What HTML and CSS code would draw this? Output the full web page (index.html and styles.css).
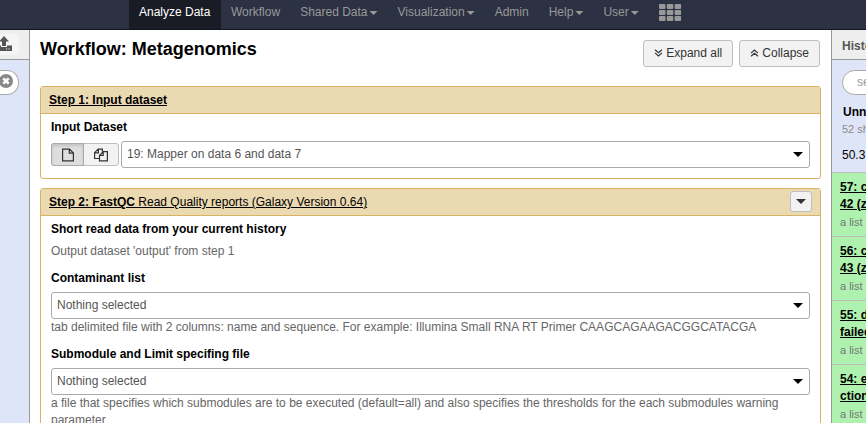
FILE: index.html
```html
<!DOCTYPE html>
<html lang="en">
<head>
<meta charset="utf-8">
<title>Galaxy</title>
<link rel="stylesheet" href="styles.css">
</head>
<body>
<nav class="masthead">
  <a class="tab active">Analyze Data</a>
  <a class="tab">Workflow</a>
  <a class="tab">Shared Data<i class="caret"></i></a>
  <a class="tab">Visualization<i class="caret"></i></a>
  <a class="tab">Admin</a>
  <a class="tab">Help<i class="caret"></i></a>
  <a class="tab">User<i class="caret"></i></a>
  <a class="tab apps"><svg width="23" height="18" viewBox="0 0 23 18"><g fill="#999"><rect width="6.5" height="5" rx="1"/><rect x="7.8" width="6.5" height="5" rx="1"/><rect x="15.6" width="6.5" height="5" rx="1"/><rect y="6" width="6.5" height="5" rx="1"/><rect x="7.8" y="6" width="6.5" height="5" rx="1"/><rect x="15.6" y="6" width="6.5" height="5" rx="1"/><rect y="12" width="6.5" height="5" rx="1"/><rect x="7.8" y="12" width="6.5" height="5" rx="1"/><rect x="15.6" y="12" width="6.5" height="5" rx="1"/></g></svg></a>
</nav>
<div class="columns">
  <aside class="tools">
    <div class="panel-head"><span class="upload"><svg width="14" height="16" viewBox="0 0 14 16"><path fill="#555" d="M6 0l5 5.500H8V10H4V5.500H1zM-2 9.500H3V11H9V9.500H14V15H-2z"/><path fill="#eee" d="M8 12.500h1.200v1H8zM10.500 12.500h1.200v1h-1.200z"/></svg></span></div>
    <div class="tool-search"><svg width="14" height="14" viewBox="0 0 14 14"><circle cx="7" cy="7" r="7" fill="#888"/><path d="M4.300 4.300l5.400 5.400M9.700 4.300l-5.400 5.400" stroke="#fff" stroke-width="2.600"/></svg></div>
  </aside>
  <main class="center">
    <header class="title-row">
      <h1>Workflow: Metagenomics</h1>
      <div class="actions">
        <button class="btn"><svg width="9" height="9" viewBox="0 0 9 9"><path d="M1 .7l3.500 3L8 .7M1 3.900l3.500 3L8 3.900"/></svg>Expand all</button>
        <button class="btn"><svg width="9" height="9" viewBox="0 0 9 9"><path d="M1 4.100l3.500-3L8 4.100M1 7.300l3.500-3L8 7.300"/></svg>Collapse</button>
      </div>
    </header>
    <section class="step">
      <div class="step-head"><u><b>Step 1: Input dataset</b></u></div>
      <div class="step-body">
        <label>Input Dataset</label>
        <div class="data-row">
          <div class="toggle">
            <span class="on"><svg width="12" height="14" viewBox="0 0 12 14"><path d="M.6 1.100H7.500L11.400 5V12.900H.6zM7.300 1.100V5.200H11.400"/></svg></span>
            <span><svg width="14" height="14" viewBox="0 0 14 14"><path d="M5.500 10.500H.6V4.700L4.200 1.100H8.400V3.500M4.400 1.100V4.900H.6M5.500 7.300L9.200 3.600H13.400V12.900H5.500zM9.200 3.600V7.400H5.500"/></svg></span>
          </div>
          <div class="select">19: Mapper on data 6 and data 7<i class="arrow"></i></div>
        </div>
      </div>
    </section>
    <section class="step">
      <div class="step-head"><u><b>Step 2: FastQC</b> Read Quality reports (Galaxy Version 0.64)</u><span class="menu"><i class="arrow"></i></span></div>
      <div class="step-body">
        <label>Short read data from your current history</label>
        <p class="output">Output dataset 'output' from step 1</p>
        <label>Contaminant list</label>
        <div class="select">Nothing selected<i class="arrow"></i></div>
        <p class="help">tab delimited file with 2 columns: name and sequence. For example: Illumina Small RNA RT Primer CAAGCAGAAGACGGCATACGA</p>
        <label>Submodule and Limit specifing file</label>
        <div class="select">Nothing selected<i class="arrow"></i></div>
        <p class="help">a file that specifies which submodules are to be executed (default=all) and also specifies the thresholds for the each submodules warning parameter</p>
      </div>
    </section>
  </main>
  <aside class="history">
    <div class="panel-head">History</div>
    <div class="summary">
      <div class="search">search datasets</div>
      <b class="name">Unnamed history</b>
      <div class="shown">52 shown</div>
      <div class="size">50.3 GB</div>
    </div>
    <div class="item"><b>57: c<br>42 (z</b><small>a list of</small></div>
    <div class="item"><b>56: c<br>43 (z</b><small>a list of</small></div>
    <div class="item"><b>55: d<br>failed</b><small>a list of</small></div>
    <div class="item"><b>54: e<br>ction</b><small>a list of</small></div>
  </aside>
</div>
</body>
</html>
```
FILE: styles.css
```css
* { box-sizing: border-box; }
body {
  margin: 0;
  height: 423px;
  overflow: hidden;
  background: #fff;
  color: #000;
  font: 12px/17px "Liberation Sans", Arial, sans-serif;
}
.masthead {
  display: flex;
  height: 30px;
  padding-left: 129px;
  background: #2c3143;
  border-bottom: 1px solid #11131d;
}
.tab {
  display: flex;
  padding: 4px 10px 0;
  color: #999;
  white-space: nowrap;
}
.tab.active { width: 92px; background: #191c24; color: #fff; }
.tab.apps { padding: 4px 10px 0; }
.caret {
  margin: 7px 0 0 2px;
  width: 8px;
  height: 4px;
  background: #999;
  clip-path: polygon(0 0, 100% 0, 50% 100%);
}
.columns { display: flex; height: 393px; overflow: hidden; }
.tools {
  flex: 0 0 30px;
  overflow: hidden;
  background: #dfe5f9;
  border-right: 1px solid #999;
}
.panel-head {
  height: 30px;
  padding: 8px 0 0 10px;
  background: #eee;
  border-bottom: 1px solid #999;
  color: #555;
  font-weight: bold;
}
.tools .panel-head { padding: 4px 0 0; }
.upload {
  display: block;
  width: 19px;
  height: 21px;
  padding-top: 2px;
  background: #f5f5f5;
  border-radius: 0 3px 3px 0;
}
.upload svg { display: block; margin-left: -2px; }
.tool-search {
  width: 19px;
  height: 25px;
  margin-top: 10px;
  padding: 3px 0 0;
  background: #fff;
  border: 1px solid #aaa;
  border-left: 0;
  border-radius: 0 12px 12px 0;
}
.tool-search svg { display: block; margin-left: -1px; }
.center { flex: 0 0 801px; padding: 10px 10px 0; overflow: hidden; }
.title-row { display: flex; justify-content: space-between; height: 46px; padding-right: 1px; }
h1 { margin: -2px 0 0; font-size: 18px; line-height: 22px; }
.actions { display: flex; gap: 6px; }
.btn {
  display: flex;
  align-items: center;
  height: 27px;
  padding: 0 10px;
  gap: 3px;
  background: #f2f2f2;
  border: 1px solid #bfbfbf;
  border-radius: 3px;
  color: #333;
  font: inherit;
}
.btn svg, .toggle svg { fill: none; stroke: #333; stroke-width: 1.2; }
.step {
  margin-bottom: 9px;
  border: 1px solid #d8b365;
  border-radius: 3px;
}
.step-head {
  display: flex;
  justify-content: space-between;
  height: 27px;
  padding: 5px 8px 0;
  background: #ebd9b2;
  border-bottom: 1px solid #d8b365;
}
.menu {
  display: flex;
  align-items: center;
  justify-content: center;
  width: 22px;
  height: 21px;
  margin-top: -3px;
  background: #f2f2f2;
  border: 1px solid #bfbfbf;
  border-radius: 3px;
}
.arrow {
  width: 10px;
  height: 5px;
  background: #000;
  clip-path: polygon(0 0, 100% 0, 50% 100%);
}
.menu .arrow { background: #333; }
.step-body { padding: 5px 10px 10px; }
label { display: block; height: 17px; margin-bottom: 5px; font-weight: bold; }
.output { margin: 0 0 10px; color: #666; }
.help { margin: 0 0 10px; color: #666; }
.select {
  display: flex;
  flex: 1;
  align-items: center;
  justify-content: space-between;
  height: 27px;
  padding: 0 6px 0 5px;
  background: #fff;
  border: 1px solid #aaa;
  border-radius: 3px;
  color: #555;
}
.data-row { display: flex; align-items: center; gap: 2px; }
.toggle {
  display: flex;
  width: 68px;
  height: 23px;
  background: #f2f2f2;
  border: 1px solid #bfbfbf;
  border-radius: 3px;
}
.toggle span { display: flex; flex: 1; align-items: center; justify-content: center; }
.toggle .on {
  flex: 0 0 33px;
  margin: -1px 0 -1px -1px;
  background: #dedede;
  border: 1px solid #aaa;
  border-radius: 3px 0 0 3px;
  box-shadow: inset 0 2px 3px rgba(0, 0, 0, .12);
}
.history {
  flex: 0 0 35px;
  overflow: hidden;
  background: #dfe5f9;
  border-left: 1px solid #999;
  white-space: nowrap;
}
.summary { height: 112px; padding: 10px 0 0 10px; }
.search {
  width: 180px;
  height: 25px;
  margin-bottom: 9px;
  padding: 3px 14px;
  background: #fff;
  border: 1px solid #aaa;
  border-radius: 13px;
  color: #999;
}
.name { display: block; margin-left: 1px; }
.shown { color: #888; font-size: 11px; }
.size { margin-top: 9px; }
.item {
  height: 64px;
  padding: 6px 0 0 8px;
  background: #aff1af;
  border-top: 1px solid #bfbfbf;
}
.item b { text-decoration: underline; }
.item small { display: block; margin-top: 1px; color: #777; font-size: 11px; }
```
